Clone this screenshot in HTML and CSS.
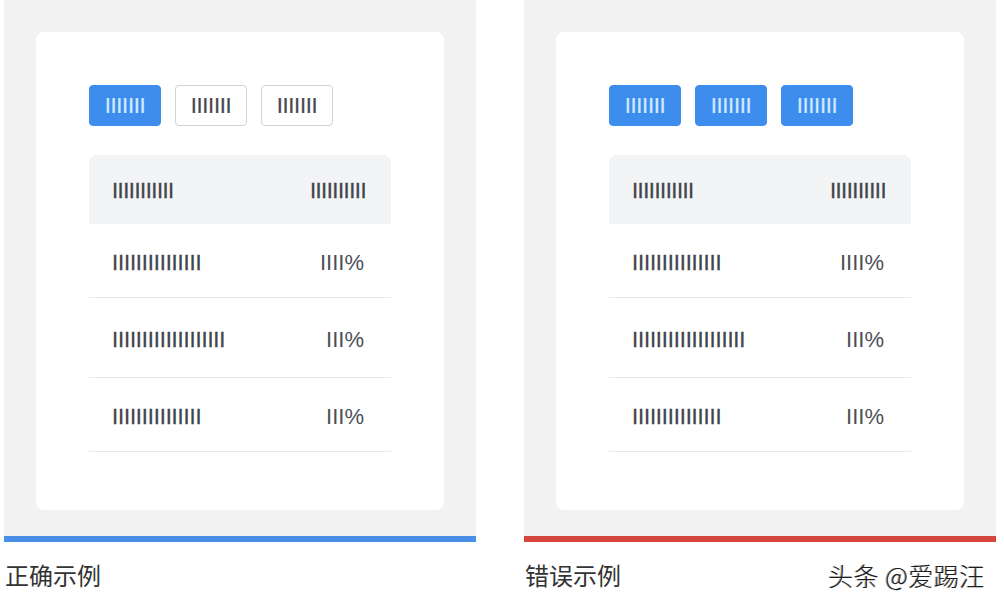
FILE: index.html
```html
<html>
    <head>
        <link rel="stylesheet" href="styles.css">
    </head>
    <body>
        <div class="compare">
            <div class="example">
                <div class="panel">
                    <div class="card">
                        <div class="tabs">
                            <span class="tab tab-on">IIIIIII</span>
                            <span class="tab">IIIIIII</span>
                            <span class="tab">IIIIIII</span>
                        </div>
                        <div class="table">
                            <div class="thead"><span>IIIIIIIIIII</span><span>IIIIIIIIII</span></div>
                            <div class="row"><span>IIIIIIIIIIIIIII</span><span class="pct">IIII%</span></div>
                            <div class="row"><span>IIIIIIIIIIIIIIIIIII</span><span class="pct">III%</span></div>
                            <div class="row"><span>IIIIIIIIIIIIIII</span><span class="pct">III%</span></div>
                        </div>
                    </div>
                </div>
                <div class="bar bar-good"></div>
                <div class="caption"><span>正确示例</span></div>
            </div>

            <div class="example">
                <div class="panel">
                    <div class="card">
                        <div class="tabs">
                            <span class="tab tab-on">IIIIIII</span>
                            <span class="tab tab-on">IIIIIII</span>
                            <span class="tab tab-on">IIIIIII</span>
                        </div>
                        <div class="table">
                            <div class="thead"><span>IIIIIIIIIII</span><span>IIIIIIIIII</span></div>
                            <div class="row"><span>IIIIIIIIIIIIIII</span><span class="pct">IIII%</span></div>
                            <div class="row"><span>IIIIIIIIIIIIIIIIIII</span><span class="pct">III%</span></div>
                            <div class="row"><span>IIIIIIIIIIIIIII</span><span class="pct">III%</span></div>
                        </div>
                    </div>
                </div>
                <div class="bar bar-bad"></div>
                <div class="caption"><span>错误示例</span><span class="mark">头条 @爱踢汪</span></div>
            </div>
        </div>
    </body>
</html>
```

FILE: styles.css
```css
body {
    margin: 0;
    background: #ffffff;
    font-family: "Liberation Sans", Arial, sans-serif;
}
.compare {
    display: flex;
    gap: 48px;
    padding: 0 0 0 4px;
}
.example {
    width: 472px;
}
.panel {
    height: 536px;
    box-sizing: border-box;
    padding: 32px;
    background: #f2f2f3;
}
.card {
    height: 478px;
    box-sizing: border-box;
    padding: 53px;
    background: #ffffff;
    border-radius: 8px;
}
.tabs {
    display: flex;
    gap: 14px;
}
.tab {
    width: 72px;
    height: 41px;
    box-sizing: border-box;
    display: flex;
    align-items: center;
    justify-content: center;
    border: 1px solid #d2d2d4;
    border-radius: 4px;
    font-size: 22px;
    letter-spacing: -0.3px;
    color: #45494f;
    -webkit-text-stroke: 0.2px currentColor;
}
.tab-on {
    background: #3d8def;
    border-color: #3d8def;
    color: #d4eaff;
}
.table {
    margin: 29px 0 0 0;
    color: #41454c;
    font-size: 22px;
    letter-spacing: -0.15px;
    -webkit-text-stroke: 0.3px currentColor;
}
.thead,
.row {
    display: flex;
    justify-content: space-between;
    align-items: center;
    padding: 0 25px 0 23px;
}
.thead {
    height: 69px;
    padding-top: 3px;
    box-sizing: border-box;
    background: #f3f4f6;
    border-radius: 8px 8px 0 0;
    letter-spacing: -0.5px;
}
.row {
    height: 74px;
    box-sizing: border-box;
    padding-top: 5px;
    border-bottom: 1px solid #e7e7e9;
}
.row:nth-child(3) {
    height: 80px;
}
.pct {
    color: #4b4f56;
    margin-right: 2px;
    letter-spacing: 0;
    -webkit-text-stroke: 0;
}
.bar {
    height: 6px;
}
.bar-good {
    background: #4a8fe6;
}
.bar-bad {
    background: #d6463f;
}
.caption {
    display: flex;
    justify-content: space-between;
    margin: 16px 0 0 1px;
    line-height: 34px;
    font-size: 24px;
    font-family: "Noto Sans CJK SC", sans-serif;
    color: #333333;
}
.mark {
    margin-right: 11px;
    font-size: 25px;
    font-weight: 300;
    letter-spacing: 0.5px;
    color: #1c1c1c;
    text-shadow: 1px 1px 0 #ffffff, -1px 0 0 #9a9a9a;
}
```
